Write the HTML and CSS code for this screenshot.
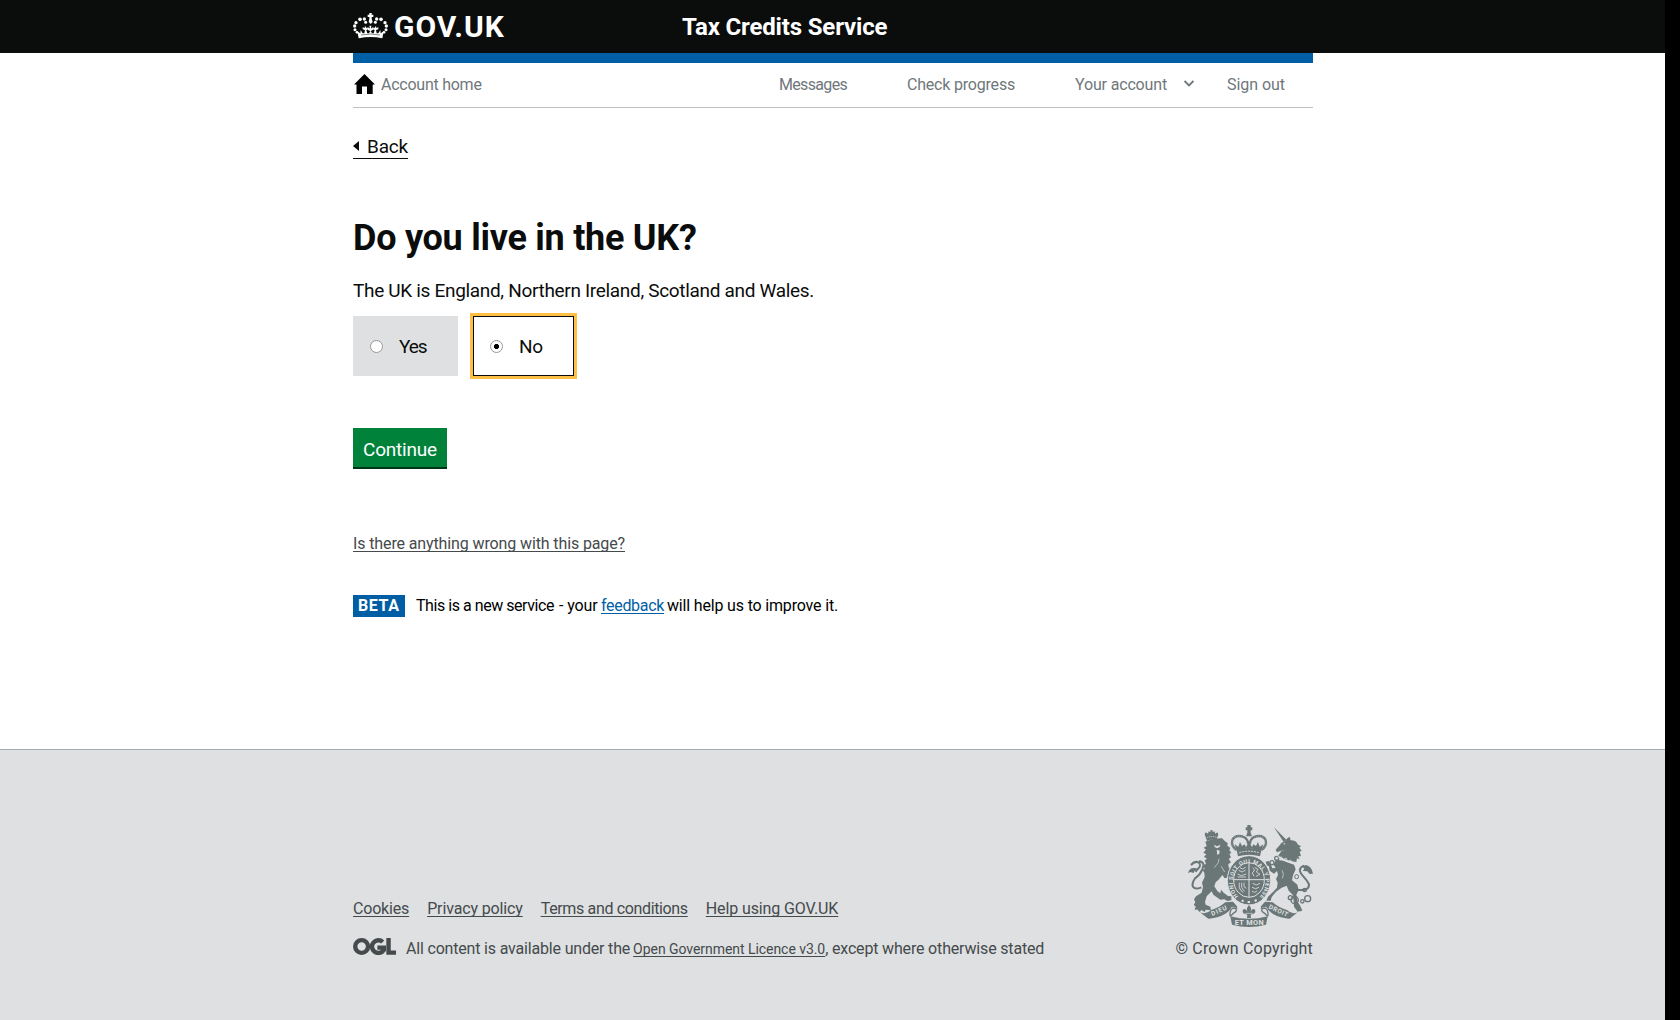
FILE: index.html
```html
<!DOCTYPE html>
<html lang="en">
<head>
<meta charset="utf-8">
<title>Do you live in the UK? - Tax Credits Service</title>
<link rel="stylesheet" href="styles.css">
</head>
<body>
<div class="page">
  <header class="header">
    <div class="wrap header-inner">
      <a class="logo" href="#">
        <svg class="crown" viewBox="0 0 105 78" aria-hidden="true">
          <g fill="#fff">
            <path d="M13 55L22 61 23 51 29 61 34 61 36 51 29 49 29 43 35 45 36 38 40 45 44 43 44 49 40 52 43 61 48 61 52 54 46 52 43 48 47 43 51 47 49 38 55 38 54 47 58 43 62 48 58 52 53 54 57 61 62 61 65 52 61 49 61 43 65 45 69 38 70 45 76 43 76 49 69 51 71 61 76 61 82 51 83 61 92 55 88 76Q53 68 17 76Z"/>
            <path d="M49 0H56V5H61V12H56V17L59 27 53 33 47 27 49 17V12H44V5H49Z"/>
            <circle cx="5" cy="39" r="5"/><circle cx="6" cy="50" r="4.5"/><circle cx="12" cy="58" r="4"/>
            <circle cx="9" cy="29" r="5"/><circle cx="21" cy="19" r="5.5"/><circle cx="34" cy="18" r="5"/><circle cx="38" cy="28" r="4.5"/>
            <circle cx="100" cy="39" r="5"/><circle cx="99" cy="50" r="4.5"/><circle cx="93" cy="58" r="4"/>
            <circle cx="96" cy="29" r="5"/><circle cx="84" cy="19" r="5.5"/><circle cx="71" cy="18" r="5"/><circle cx="67" cy="28" r="4.5"/>
          </g>
          <path d="M24 66Q53 60 81 66" fill="none" stroke="#0b0c0c" stroke-width="1.5"/>
        </svg>
        <span class="logo-text">GOV.UK</span>
      </a>
      <a class="service-name" href="#">Tax Credits Service</a>
    </div>
  </header>
  <div class="wrap content">
    <nav class="account-nav">
      <a class="home" href="#">
        <svg class="home-icon" viewBox="0 0 21 20" aria-hidden="true"><path d="M10.5 0L21 10.4H18.7V20H13V12.5H8V20H2.5V10.4H0Z"/></svg>
        <span>Account home</span>
      </a>
      <a class="messages" href="#">Messages</a>
      <a class="progress" href="#">Check progress</a>
      <a class="your-account" href="#">Your account
        <svg class="chevron" viewBox="0 0 10 7" aria-hidden="true"><path d="M.6 1L5 5.4 9.4 1" fill="none" stroke="#6f777b" stroke-width="1.8"/></svg>
      </a>
      <a class="sign-out" href="#">Sign out</a>
    </nav>
    <main>
      <a class="back" href="#"><i class="back-arrow"></i>Back</a>
      <h1>Do you live in the UK?</h1>
      <p class="hint">The UK is England, Northern Ireland, Scotland and Wales.</p>
      <div class="options">
        <label class="option"><span class="radio"></span><span class="yes">Yes</span></label>
        <label class="option selected"><span class="radio checked"></span><span>No</span></label>
      </div>
      <button class="button" type="button">Continue</button>
      <a class="report" href="#">Is there anything wrong with this page?</a>
      <div class="phase">
        <strong class="tag">BETA</strong>
        <span class="phase-new">This is a new service</span>
        <span class="phase-your">- your</span>
        <a class="phase-link" href="#">feedback</a>
        <span class="phase-help">will help us to improve it.</span>
      </div>
    </main>
  </div>
  <footer class="footer">
    <div class="wrap footer-inner">
      <div class="footer-meta">
        <div class="footer-links">
          <a href="#">Cookies</a><a class="privacy" href="#">Privacy policy</a><a class="terms" href="#">Terms and conditions</a><a class="help" href="#">Help using GOV.UK</a>
        </div>
        <div class="licence">
          <svg class="ogl" viewBox="0 0 127 51" preserveAspectRatio="none" aria-hidden="true">
            <g fill="none" stroke="#454a4c" stroke-width="13">
              <circle cx="25.5" cy="25.5" r="19"/>
              <path d="M88 12A19 19 0 1 0 91 36V29H72"/>
              <path d="M105 0V44H127"/>
            </g>
          </svg>
          <span class="licence-text">All content is available under the</span>
          <a class="ogl-link" href="#">Open Government Licence v3.0</a><span class="licence-end">, except where otherwise stated</span>
        </div>
      </div>
      <a class="copyright" href="#">
        <svg class="arms" viewBox="84 44 375 306" aria-hidden="true">
          <g fill="#6b7677">
            <!-- lion -->
            <path d="M141 92L134 72 137 66 144 70 146 63 151 65 152 59H157L158 65 163 63 166 70 172 66 175 72 169 90Q155 84 141 92Z"/>
            <path d="M136 94Q160 83 186 84L197 94 203 98 202 106 211 113 208 119 214 128 208 131 213 141 206 146 213 156 205 162 206 171 217 181 215 187 222 192 216 198 220 204 210 213 203 209 207 201 194 204 187 194 177 207 167 216 163 228 172 242 181 249 183 238 191 247 204 257 214 258 214 270 202 272 193 267 181 268 160 253 155 243 140 258 135 275 137 283 151 289 153 300 137 298 134 305 124 299 119 305 111 297 104 300 107 288 101 284 106 276 102 267 108 258 125 247 129 230 126 217 134 200 133 187 127 178 134 176 130 164 138 161 134 150 141 145 132 139 139 132 130 127 138 118 131 112 140 107Z"/>
            <path d="M84 189Q88 171 105 173L115 176Q102 179 101 188L91 185Z"/>
            <!-- unicorn -->
            <path d="M342 51L379 88 371 95Z"/>
            <path d="M374 93L382 84 389 79 392 90Q409 90 414 103L423 107 418 112 425 121 419 124 423 138 415 137 419 147 411 144 409 155Q379 152 355 136L364 122 378 118 363 121 351 126 347 118 359 105 364 98Z"/>
            <path d="M349 148L370 151 402 163 407 177 399 195 396 210 412 223 416 239 409 253 413 274 421 287 427 301 413 304 402 289 401 272 398 253 386 241 380 226 365 232 348 244 335 260 332 271 319 271 324 259 339 245 351 232 353 217 348 206 354 194 351 182 342 190 329 181 327 168 320 165 317 154 326 152 333 163 337 174 347 173 341 163 344 155Z"/>
            <path d="M459 190Q455 167 438 164L425 169 433 174 429 182 442 183 449 191Z"/>
          </g>
          <g fill="none" stroke="#6b7677">
            <path d="M106 184C119 171 125 166 117 157Q105 150 93 164M124 231C101 241 89 229 105 204Q120 194 127 177Q137 155 117 153" stroke-width="6"/>
            <path d="M410 238Q448 244 447 222 442 211 428 196 409 174 433 166" stroke-width="6"/>
            <g stroke-width="4"><circle cx="443" cy="265" r="9"/><circle cx="427" cy="273" r="5"/><circle cx="404" cy="269" r="11"/><circle cx="391" cy="262" r="6"/><circle cx="434" cy="239" r="5"/><circle cx="350" cy="144" r="6"/><circle cx="336" cy="157" r="6"/></g>
          </g>
          <g fill="#dee0e2">
            <path d="M163 103l7 5 11-4-2 6-8 4-7-4zM170 118l9 3-1 9-6 4z"/>
            <path d="M370 98l7 2-5 3z"/>
          </g>
          <g fill="none" stroke="#dee0e2" stroke-width="3">
            <path d="M141 82Q157 75 171 82" stroke-width="2" stroke-dasharray="4 2"/>
            <path d="M353 138Q380 159 410 160M363 138l7 10 8-5 6 11 8-5 6 11" stroke-width="2.5"/>
            <path d="M177 145l-2 12-12 15M184 168l10 17M366 180q8 12 1 24M407 193l-3 16" stroke-width="2"/>
          </g>
          <circle cx="410" cy="199" r="6" fill="#dee0e2" stroke="#6b7677" stroke-width="3"/>
          <!-- royal crown -->
          <g fill="#6b7677">
            <path d="M262 44h10v7h5v9h-5v7l4 11h-18l4-11v-7h-5v-9h5z"/>
            <path d="M230 120Q267 106 304 120L300 138Q267 129 234 138Z"/>
            <path d="M224 102l11 7 5-14 6 12 8-5 4 9 9-19 9 19 4-9 8 5 6-12 5 14 11-7-6 19Q267 106 230 121Z"/>
          </g>
          <path d="M230 119Q212 106 217 89 227 70 254 81M304 119Q322 106 317 89 307 70 280 81M254 81Q264 88 264 100M280 81Q270 88 270 100" fill="none" stroke="#6b7677" stroke-width="7"/>
          <path d="M230 119Q212 106 217 89 227 70 254 81M304 119Q322 106 317 89 307 70 280 81" fill="none" stroke="#dee0e2" stroke-width="1.5" stroke-dasharray="2 4"/>
          <path d="M238 127Q267 118 296 127" fill="none" stroke="#dee0e2" stroke-width="3" stroke-dasharray="6 3"/>
          <!-- garter and shield -->
          <ellipse cx="267" cy="210" rx="65" ry="74" fill="#6b7677" stroke="#dee0e2" stroke-width="3"/>
          <path id="garter" d="M235 258A49 57 0 1 1 300 258" fill="none"/>
          <text class="garter-text"><textPath href="#garter" textLength="262">HONI SOIT QUI MAL Y PENSE</textPath></text>
          <ellipse cx="267" cy="209" rx="46" ry="52" fill="#6b7677" stroke="#dee0e2" stroke-width="3"/>
          <g fill="none" stroke="#dee0e2" stroke-width="3">
            <path d="M267 158V260M222 208H312"/>
            <path d="M236 180l10 5 11-6M233 191l11 5 15-5M240 172l7 4 10-5M233 200h25M278 172l6 7-7 9 5 10M284 171l10 6-5 8 11 7-12 6M278 219l11 5 11-5M276 231l11 4 10-4M276 243l8 3 7-4" stroke-width="2.5"/>
            <path d="M238 217v15q3 10 12 14M245 217v14q3 9 9 11M252 217v12l7 5" stroke-width="2.5"/>
            <path d="M245 270l6 3M263 275h7M284 272l6-3" stroke-width="6"/>
          </g>
          <!-- motto ribbon -->
          <g fill="#6b7677">
            <path d="M120 306Q139 314 153 299 175 294 196 276L219 274 231 288 232 297Q224 287 215 290 207 307 183 317 158 325 145 325Z"/>
            <path d="M413 306Q396 314 381 299 359 294 338 276L315 274 303 288 302 297Q310 287 319 290 327 307 351 317 376 325 389 325Z"/>
            <path d="M211 318Q267 333 323 318L318 343Q267 357 216 343Z"/>
            <path d="M267 284q10 10 4 20 7-12 14-6 4 10-7 13l-6 2 1 10h-12l1-10-6-2q-11-3-7-13 7-6 14 6-6-10 4-20z"/>
          </g>
          <path d="M211 318Q207 300 219 293 232 294 228 303 220 308 211 318M323 318Q327 300 315 293 302 294 306 303 314 308 323 318" fill="#dee0e2" stroke="#6b7677" stroke-width="4"/>
          <path d="M256 309H278" stroke="#dee0e2" stroke-width="2"/>
          <text class="motto" x="157" y="317" transform="rotate(-24 157 317)" textLength="49">DIEU</text>
          <text class="motto" x="325" y="294" transform="rotate(25 325 294)" textLength="61">DROIT</text>
          <text class="motto motto-mid" x="224" y="345" textLength="87">ET MON</text>
        </svg>
        <span>© Crown Copyright</span>
      </a>
    </div>
  </footer>
</div>
</body>
</html>
```
FILE: styles.css
```css
* { box-sizing: border-box; }
html { background: #000; }
body { margin: 0; font: 16px/20px Roboto, "Liberation Sans", sans-serif; color: #0b0c0c; letter-spacing: -0.18px; }
a { color: inherit; text-decoration: none; white-space: nowrap; }
span { white-space: nowrap; }
.page { width: 1665px; min-height: 1020px; background: #fff; display: flex; flex-direction: column; }
.wrap { width: 960px; margin-left: 353px; }

.header { height: 53px; background: #0b0c0c; color: #fff; }
.header-inner { display: flex; height: 53px; }
.logo { display: flex; width: 329px; }
.crown { width: 35px; height: 26px; margin-top: 13px; }
.logo-text { margin: 7px 0 0 6px; font-size: 30px; line-height: 40px; font-weight: 700; letter-spacing: 1px; }
.service-name { margin-top: 12px; font-size: 24px; line-height: 30px; font-weight: 700; letter-spacing: -.16px; }

.content { height: 696px; }
.account-nav { height: 55px; border-top: 10px solid #005ea5; border-bottom: 1px solid #bfc1c3; display: flex; padding-top: 12px; color: #6f777b; }
.home { display: flex; width: 426px; letter-spacing: -.25px; }
.home-icon { width: 21px; height: 20px; margin: -1px 6px 0 1px; fill: #000; }
.messages { width: 128px; letter-spacing: -.67px; }
.progress { width: 168px; letter-spacing: -.2px; }
.your-account { width: 152px; letter-spacing: -.16px; }
.chevron { width: 10px; height: 7px; margin-left: 13px; vertical-align: 3px; }
.sign-out { letter-spacing: -.05px; }

main { display: flex; flex-direction: column; align-items: flex-start; font-size: 19px; line-height: 25px; }
.back { display: flex; align-items: center; height: 25px; margin-top: 26px; border-bottom: 1px solid #0b0c0c; line-height: 24px; padding-top: 1px; }
.back-arrow { width: 6px; height: 10px; margin: -1px 8px 0 0; background: #0b0c0c; clip-path: polygon(0 50%, 100% 0, 100% 100%); }
h1 { margin: 59px 0 0; font-size: 36px; line-height: 40px; font-weight: 700; letter-spacing: -.26px; }
.hint { margin: 20px 0 0; letter-spacing: -.32px; }
.options { display: flex; gap: 15px; margin-top: 13px; }
.option { width: 105px; height: 60px; padding-left: 17px; background: #dee0e2; display: flex; align-items: center; gap: 16px; padding-top: 1px; }
.yes { letter-spacing: -1.1px; }
.selected { width: 101px; padding-left: 16px; background: #fff; border: 1px solid #0b0c0c; outline: 3px solid #ffbf47; }
.radio { width: 13px; height: 13px; border: 1px solid #999; border-radius: 50%; background: #fff; }
.checked { background: radial-gradient(circle, #000 0 2.2px, #fff 2.9px); }
.button { width: 94px; height: 39px; margin-top: 52px; padding: 3px 0 0; border: 0; border-radius: 0; background: #00823b; box-shadow: 0 2px 0 #003618; color: #fff; font: inherit; letter-spacing: -.2px; }
.report { margin-top: 66px; font-size: 16px; line-height: 22px; color: #454a4c; letter-spacing: -.12px; }
.report, .phase-link, .footer-links a, .ogl-link { text-decoration: underline; text-decoration-thickness: 1px; text-underline-offset: 2px; text-decoration-skip-ink: none; }
.phase { display: flex; height: 22px; margin-top: 40px; font-size: 16px; line-height: 21px; color: #000; }
.tag { width: 52px; height: 22px; margin-right: 11px; padding-left: 5px; background: #005ea5; color: #fff; font-weight: 700; letter-spacing: .6px; }
.phase-new { width: 143px; letter-spacing: -.45px; }
.phase-your { width: 42px; letter-spacing: -.1px; }
.phase-link { margin-right: 3px; color: #005ea5; letter-spacing: -.32px; }
.phase-help { letter-spacing: -.17px; }

.footer { height: 271px; background: #dee0e2; border-top: 1px solid #a1acb2; color: #454a4c; }
.footer-inner { display: flex; justify-content: space-between; }
.footer-meta { padding-top: 149px; }
.footer-links { display: flex; gap: 18px; }
.footer-links .privacy { letter-spacing: -.14px; }
.footer-links .terms { letter-spacing: -.35px; }
.footer-links .help { letter-spacing: -.11px; }
.licence { display: flex; align-items: baseline; margin-top: 18px; }
.ogl { width: 43px; height: 17px; margin-right: 10px; position: relative; top: 1px; }
.licence-text { margin-right: 3px; }
.ogl-link { font-size: 14px; letter-spacing: -.05px; }
.licence-end { letter-spacing: -.17px; }
.copyright { display: flex; flex-direction: column; align-items: flex-end; padding-top: 75px; letter-spacing: .18px; }
.arms { width: 125px; height: 102px; margin-bottom: 12px; }
.garter-text { font-size: 17px; font-weight: 700; fill: #dee0e2; letter-spacing: 0; }
.motto { font-size: 19px; font-weight: 700; fill: #dee0e2; letter-spacing: 0; }
.motto-mid { font-size: 22px; }
```
